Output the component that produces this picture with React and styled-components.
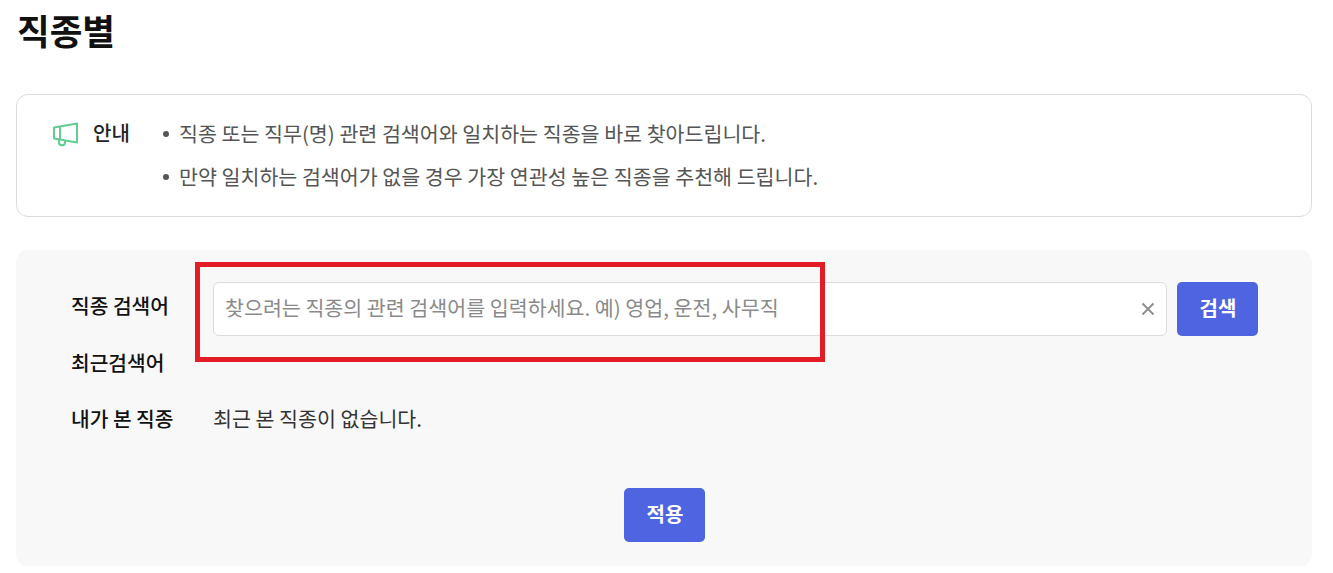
import React from "react";
import styled, { createGlobalStyle } from "styled-components";

const GlobalStyle = createGlobalStyle`
  html, body {
    margin: 0;
    padding: 0;
    background: #fff;
    font-family: "Noto Sans CJK KR", "Noto Sans", sans-serif;
  }
`;

const Page = styled.div`
  position: relative;
  width: 1333px;
  height: 573px;
  overflow: hidden;
  padding: 8px 21px 0 16px;
  box-sizing: border-box;
`;

const Title = styled.h1`
  margin: 0;
  height: 86px;
  padding-left: 1px;
  font-size: 35.5px;
  line-height: 44px;
  font-weight: 700;
  color: #111;
`;

const NoticeBox = styled.div`
  display: flex;
  align-items: flex-start;
  height: 123px;
  box-sizing: border-box;
  padding: 21px 0 0 35px;
  border: 1px solid #dcdcdc;
  border-radius: 12px;
  background: #fff;
`;

const NoticeHead = styled.div`
  display: flex;
  align-items: center;
  gap: 14px;
  width: 111px;
  height: 36px;
  font-size: 20px;
  font-weight: 500;
  color: #222;
`;

const HeadText = styled.span`
  padding-bottom: 3px;
`;

const NoticeList = styled.ul`
  list-style: none;
  margin: 0;
  padding: 0;
  display: flex;
  flex-direction: column;
  gap: 7px;
`;

const NoticeItem = styled.li`
  display: flex;
  align-items: center;
  gap: 10px;
  height: 36px;
  padding-bottom: 3px;
  box-sizing: border-box;
  font-size: 20.6px;
  color: #555;
  white-space: nowrap;
  &::before {
    content: "";
    width: 6px;
    height: 6px;
    margin-top: 3px;
    border-radius: 50%;
    background: #555;
  }
`;

const FilterPanel = styled.div`
  margin-top: 33px;
  height: 316px;
  box-sizing: border-box;
  padding: 32px 54px 0 55px;
  border-radius: 12px;
  background: #f8f8f8;
`;

const Row = styled.div`
  display: flex;
  align-items: center;
  height: ${(p) => p.$height}px;
  margin-bottom: ${(p) => p.$gap || 0}px;
`;

const Label = styled.div`
  width: 142px;
  flex: none;
  padding-bottom: 8px;
  font-size: 20.3px;
  font-weight: 500;
  color: #111;
  white-space: nowrap;
`;

const InputWrap = styled.div`
  flex: 1;
  display: flex;
  align-items: center;
  height: 54px;
  box-sizing: border-box;
  padding: 0 11px 0 11px;
  border: 1px solid #dcdcdc;
  border-radius: 6px;
  background: #fff;
`;

const Input = styled.input`
  flex: 1;
  border: 0;
  outline: 0;
  padding: 0 0 4px;
  background: transparent;
  font-family: inherit;
  font-size: 20.6px;
  color: #222;
  &::placeholder {
    color: #8a8a8a;
    opacity: 1;
  }
`;

const ClearIcon = styled.svg`
  width: 14px;
  height: 14px;
  flex: none;
`;

const BlueButton = styled.button`
  width: 81px;
  height: 54px;
  flex: none;
  margin-left: ${(p) => p.$offset || 0}px;
  padding: 0 0 4px 1px;
  border: 0;
  border-radius: 5px;
  background: #4e64e0;
  color: #fff;
  font-family: inherit;
  font-size: 20px;
  font-weight: 700;
`;

const EmptyText = styled.div`
  padding-bottom: 8px;
  font-size: 20.6px;
  color: #333;
`;

const ButtonRow = styled.div`
  display: flex;
  justify-content: center;
  margin-top: 46px;
`;

const RedMark = styled.div`
  position: absolute;
  left: 195px;
  top: 262px;
  width: 630px;
  height: 100px;
  box-sizing: border-box;
  border: 5px solid #e31c25;
`;

function MegaphoneIcon() {
  return (
    <svg width="27" height="26" viewBox="0 0 27 26" fill="none" stroke="#62cd91" strokeWidth="2" strokeLinejoin="round">
      <path d="M2 6.5 L25 2.5 V21.5 L2 17.5 Z" />
      <path d="M8 5.5 V18.5" />
      <path d="M7 18.5 V21 a3 3 0 0 0 6 .6 V20" />
    </svg>
  );
}

export default function App() {
  return (
    <Page>
      <GlobalStyle />
      <Title>직종별</Title>
      <NoticeBox>
        <NoticeHead>
          <MegaphoneIcon />
          <HeadText>안내</HeadText>
        </NoticeHead>
        <NoticeList>
          <NoticeItem>직종 또는 직무(명) 관련 검색어와 일치하는 직종을 바로 찾아드립니다.</NoticeItem>
          <NoticeItem>만약 일치하는 검색어가 없을 경우 가장 연관성 높은 직종을 추천해 드립니다.</NoticeItem>
        </NoticeList>
      </NoticeBox>
      <FilterPanel>
        <Row $height={54} $gap={10}>
          <Label>직종 검색어</Label>
          <InputWrap>
            <Input placeholder="찾으려는 직종의 관련 검색어를 입력하세요. 예) 영업, 운전, 사무직" />
            <ClearIcon viewBox="0 0 14 14" stroke="#8f8f8f" strokeWidth="2">
              <path d="M1.5 1.5 L12.5 12.5 M12.5 1.5 L1.5 12.5" />
            </ClearIcon>
          </InputWrap>
          <BlueButton $offset={10}>검색</BlueButton>
        </Row>
        <Row $height={40} $gap={16}>
          <Label>최근검색어</Label>
        </Row>
        <Row $height={40}>
          <Label>내가 본 직종</Label>
          <EmptyText>최근 본 직종이 없습니다.</EmptyText>
        </Row>
        <ButtonRow>
          <BlueButton>적용</BlueButton>
        </ButtonRow>
      </FilterPanel>
      <RedMark />
    </Page>
  );
}
